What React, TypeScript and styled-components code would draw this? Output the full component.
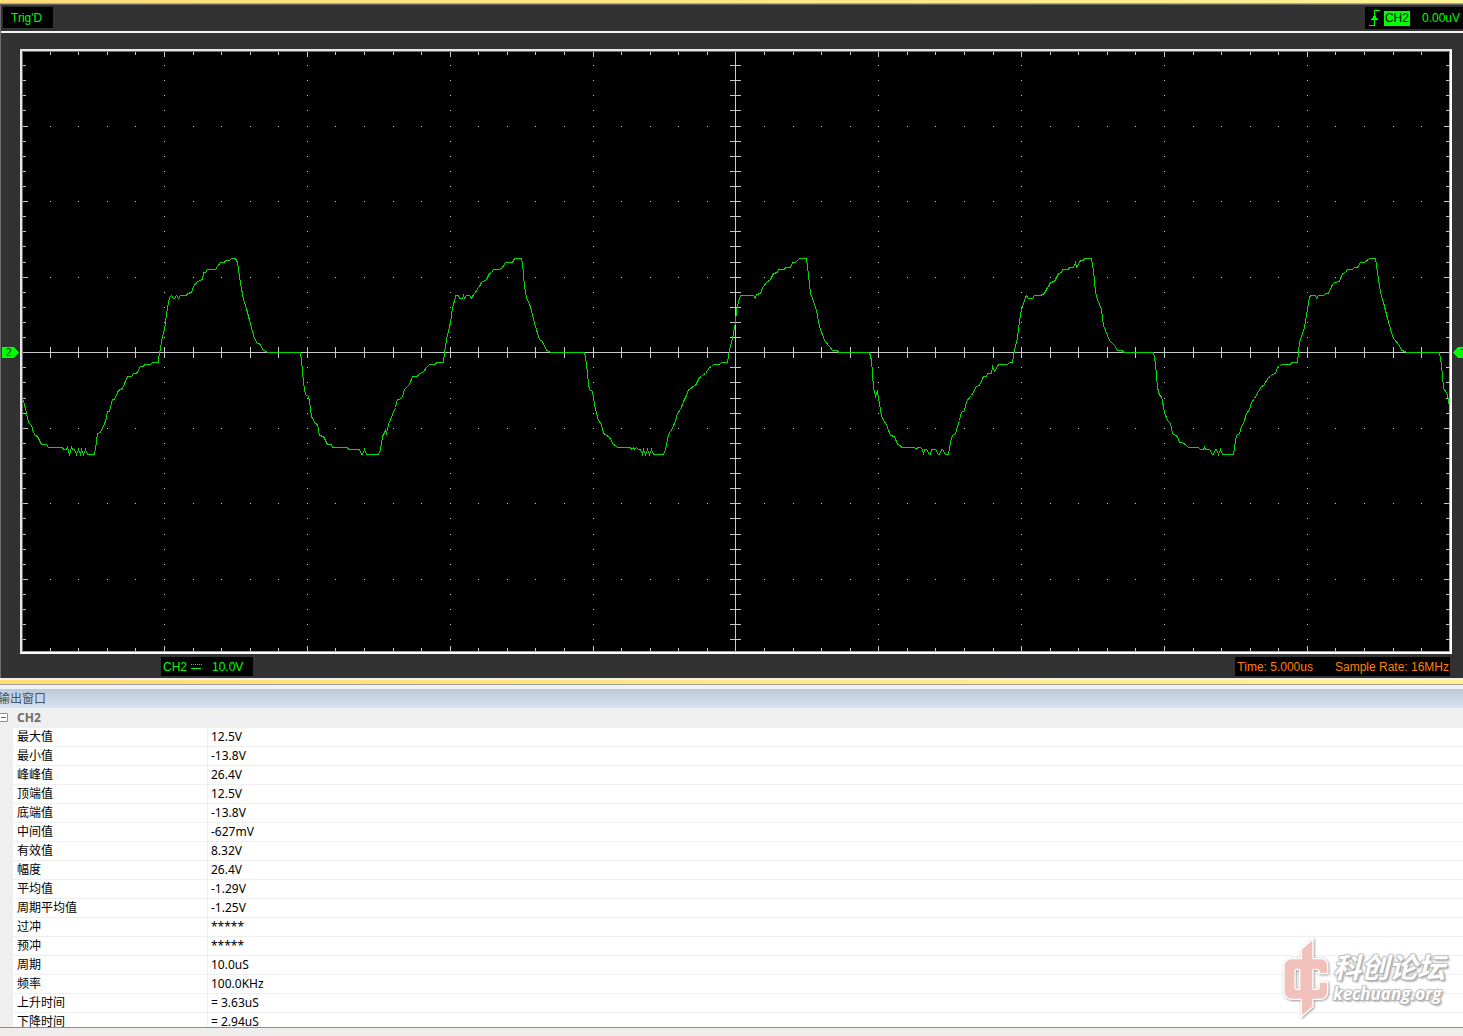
import React, { useState } from 'react';
import styled, { createGlobalStyle } from 'styled-components';

const GlobalStyle = createGlobalStyle`
  * { box-sizing: border-box; }
  html, body { margin: 0; padding: 0; background: #f0eded; }
`;

const UI_FONT = '"Noto Sans", "Noto Sans CJK SC", sans-serif';
const SCOPE_FONT = '"Liberation Sans", Arial, sans-serif';

const Page = styled.main`
  display: flex;
  flex-direction: column;
  height: 100vh;
  overflow: hidden;
  font-family: ${UI_FONT};
  font-size: 12px;
`;

const Band = styled.div<{ $size: number }>`
  flex: none;
  height: ${(p) => p.$size}px;
  background: linear-gradient(90deg, #ffdd79, #fff293);
`;

const Scope = styled.section`
  flex: none;
  background: #323232;
  border-left: 1px solid #6e6e6e;
  border-top: 1px solid #666;
  box-shadow: 0 -1px 0 #a9a494;
  margin-top: 1px;
  font-family: ${SCOPE_FONT};
  color: #00ff00;
`;

const StatusBar = styled.header`
  display: flex;
  justify-content: space-between;
  align-items: flex-start;
  height: 28px;
  padding: 2px 0 0 2px;
  border-bottom: 2px solid #f4f4f4;
`;

const Readout = styled.div<{ $height: number; $pad: string; $color?: string; $gap?: number }>`
  display: flex;
  align-items: center;
  gap: ${(p) => p.$gap ?? 0}px;
  height: ${(p) => p.$height}px;
  padding: ${(p) => p.$pad};
  background: #000;
  color: ${(p) => p.$color ?? '#00ff00'};
  line-height: 16px;
  white-space: nowrap;
`;

const Tag = styled.span`
  height: 15px;
  padding: 0 1px;
  margin: 0 8px 0 0;
  line-height: 15px;
  background: #00ff00;
  color: #000;
`;

const ScopeBody = styled.div`
  display: grid;
  grid-template-columns: 19px minmax(0, 1fr) 11px;
  align-items: center;
  padding-top: 16px;
`;

const Gutter = styled.div`
  padding: 2px 0 0 1px;
  overflow: hidden;
`;

const MarkerSvg = styled.svg`
  display: block;
`;

const Frame = styled.div`
  border: 2px solid #fff;
  border-top-color: #e6e6e6;
  border-left-color: #e6e6e6;
`;

const Bezel = styled.div`
  border: 1px solid #a8a8a8;
  border-top-color: #6a6a6a;
  border-left-color: #6a6a6a;
  background: #000;
`;

const Plot = styled.svg`
  display: block;
  width: 100%;
  height: auto;
`;

const ScopeFooter = styled.footer`
  display: flex;
  justify-content: space-between;
  padding: 3px 13px 2px 160px;
`;

const Splitter = styled.div`
  flex: none;
  border-top: 2px solid #f3f1ee;
  border-bottom: 4px solid #eef0fa;
`;

const SplitterLine = styled.div`
  border-bottom: 1px solid #a39e90;
`;

const Output = styled.section`
  display: flex;
  flex-direction: column;
  flex: 1;
  min-height: 0;
  position: relative;
`;

const OutputTitle = styled.h2`
  flex: none;
  height: 20px;
  margin: 0;
  border-bottom: 1px solid #eef1f5;
  background: linear-gradient(#bccad9, #d6e3f0);
  color: #46525f;
  font-size: 12px;
  font-weight: 400;
  line-height: 19px;
  text-indent: -2px;
`;

const TableArea = styled.div`
  flex: 1;
  min-height: 0;
  overflow: hidden;
  background: #fff;
  border-bottom: 1px solid #8c8c8c;
`;

const BottomStrip = styled.div`
  flex: none;
  height: 8px;
  background: #f0eded;
`;

const Table = styled.table`
  width: 100%;
  border-collapse: separate;
  border-spacing: 0;
  table-layout: fixed;
  color: #000;
`;

const LabelCol = styled.col`
  width: 208px;
`;

const GroupCell = styled.th`
  height: 19px;
  padding: 0;
  background: #efefef;
  text-align: left;
  vertical-align: top;
`;

const GroupLine = styled.div`
  display: flex;
  align-items: center;
  gap: 9px;
  height: 17px;
  color: #6d6d6d;
  line-height: 16px;
`;

const Toggle = styled.button`
  display: block;
  width: 9px;
  height: 9px;
  margin-left: -1px;
  padding: 0;
  border: 1px solid #919191;
  border-radius: 1px;
  background: #fff linear-gradient(#4b63a7, #4b63a7) center / 5px 1px no-repeat;
`;

const Label = styled.th`
  height: 19px;
  padding: 0 0 0 4px;
  border-left: 13px solid #efefef;
  border-right: 1px solid #efefef;
  border-bottom: 1px solid #efefef;
  font-weight: 400;
  line-height: 18px;
  text-align: left;
`;

const Value = styled.td`
  height: 19px;
  padding: 0 0 0 3px;
  border-bottom: 1px solid #efefef;
  line-height: 18px;
`;

const Watermark = styled.div`
  position: absolute;
  right: 18px;
  bottom: 16px;
  display: flex;
  align-items: center;
  color: #fff;
  font-style: italic;
  font-weight: 700;
  white-space: nowrap;
  pointer-events: none;
  text-shadow: 1px 1px 1px #aaa, -1px -1px 1px #c4c4c4, 1px -1px 1px #c4c4c4, -1px 1px 1px #b4b4b4, 2px 2px 2px #b4b4b4;
`;

const WatermarkText = styled.div`
  display: flex;
  flex-direction: column;
  padding-left: 2px;
`;

const WatermarkName = styled.span`
  font-family: "Noto Sans CJK SC", sans-serif;
  font-size: 28px;
  line-height: 32px;
`;

const WatermarkSite = styled.span`
  font-family: "Open Sans", sans-serif;
  font-size: 17px;
  line-height: 24px;
`;

/* Plot space: the screen spans x 23..1449 and y 52..651. */
const LEFT = 23;
const TOP = 52;
const RIGHT = 1449;
const BOTTOM = 651;
const CENTER_X = 735;
const CENTER_Y = 352;

const columns = Array.from({ length: 49 }, (_, i) => ({
  at: Math.floor(21.61 + 28.573 * (i + 1)),
  major: (i + 1) % 5 === 0,
}));
const rows = Array.from({ length: 39 }, (_, i) => ({
  at: Math.floor(50.5 + 15.11 * (i + 1)),
  major: (i + 1) % 5 === 0,
}));

function gridPath(): string {
  const parts: string[] = [];
  const rect = (x: number, y: number, w: number, h: number) =>
    parts.push(`M${x} ${y}h${w}v${h}h${-w}z`);
  rect(LEFT, CENTER_Y, RIGHT - LEFT, 1);
  rect(CENTER_X, TOP, 1, BOTTOM - TOP);
  columns.forEach((c) => {
    const len = c.major ? 5 : 3;
    rect(c.at, TOP, 1, len);
    rect(c.at, BOTTOM - len, 1, len);
    rect(c.at, CENTER_Y - 5, 1, 11);
  });
  rows.forEach((r) => {
    const len = r.major ? 5 : 3;
    rect(LEFT, r.at, len, 1);
    rect(RIGHT - len, r.at, len, 1);
    rect(CENTER_X - 5, r.at, 11, 1);
  });
  columns.forEach((c) =>
    rows.forEach((r) => {
      if (c.major || r.major) rect(c.at, r.at, 1, 1);
    }),
  );
  return parts.join('');
}

const TRACE = `23,400 26,413 28,422 31,425 33,432 35,435 37,436 41,444 46,444 48,447 62,447 63,449 66,449 67,447 69,454 71,447 72,449 74,449 76,454 78,449 80,454 81,449 83,454 85,449 87,454 94,454
95,448 97,433 100,432 105,421 107,411 109,411 112,399 114,399 118,390 122,388 127,376 131,376 133,373 136,373 140,366 143,366 144,364 150,364 152,362 158,362
158,358 160,348 162,336 164,329 167,307 169,297 171,295 173,298 174,298 176,295 178,298 180,295 186,295 187,293 191,292 193,286 197,281 202,279 203,272 205,272 207,269 215,269 217,266 220,262 224,262 225,260 229,260 231,258 235,258
237,262 240,283 243,299 246,308 249,320 254,338 257,343 259,343 263,350 266,351 267,352 300,352
301,360 303,382 305,394 308,396 309,400 311,416 315,423 317,424 319,435 323,436 327,444 331,444 332,447 347,447 348,449 359,449 361,454 362,454 364,449 366,454 378,454
380,449 382,436 385,430 386,433 388,424 392,414 395,407 397,399 399,399 402,396 404,389 409,384 412,376 417,376 418,374 423,371 426,367 429,364 435,364 436,362 443,362
444,352 446,339 450,322 452,307 455,297 455,295 458,295 459,298 462,298 463,295 464,298 466,295 469,295 471,298 473,294 475,292 478,287 479,286 481,282 486,279 489,273 491,272 493,269 499,269 502,267 505,262 512,262 514,258 521,258
522,263 524,286 526,297 530,306 534,323 539,339 542,341 546,350 549,351 550,352 584,352
586,363 588,383 589,389 592,391 595,409 598,420 601,424 603,433 605,434 609,437 613,444 615,445 617,447 630,447 631,449 633,447 634,449 636,447 638,449 640,449 642,454 643,449 645,454 647,449 649,454 651,449 653,454 663,454
665,449 668,434 672,428 675,420 677,413 680,409 683,401 686,395 688,389 691,388 692,386 695,385 699,377 701,376 703,374 705,373 709,367 711,366 713,364 719,364 721,362 727,362
729,349 732,338 735,322 736,310 738,301 740,295 753,295 755,298 756,294 760,293 762,287 763,286 766,282 770,279 773,273 777,272 778,269 784,269 785,267 790,267 792,262 795,262 799,258 806,258
808,275 810,293 812,298 816,310 819,326 824,340 829,346 832,350 837,350 838,352 869,352
871,360 873,387 875,396 877,390 878,398 881,415 883,420 886,424 890,435 894,436 897,444 900,445 901,447 914,447 916,449 917,447 920,447 922,449 923,454 924,449 926,449 929,454 930,454 931,449 935,449 938,454 939,454 941,449 942,449 945,454 948,454
950,441 952,435 955,433 957,426 959,420 961,412 964,410 966,401 971,395 976,386 979,385 983,376 986,376 987,373 991,373 992,366 994,371 997,366 998,364 1007,364 1009,362 1012,362
1014,350 1017,337 1019,320 1021,309 1025,297 1026,295 1028,298 1032,298 1034,295 1040,295 1044,293 1047,287 1048,286 1050,282 1054,281 1058,273 1061,272 1062,269 1068,269 1069,267 1073,267 1075,262 1076,267 1079,262 1080,260 1083,260 1084,258 1091,258
1093,270 1095,292 1097,299 1101,309 1103,325 1109,340 1114,345 1117,350 1122,350 1123,352 1153,352
1155,363 1157,387 1159,395 1161,396 1164,412 1167,420 1170,423 1172,433 1175,435 1177,436 1179,442 1182,442 1186,445 1188,447 1198,447 1200,449 1203,449 1204,447 1205,449 1209,449 1212,454 1213,454 1215,449 1216,449 1218,454 1220,449 1222,454 1233,454
1234,447 1236,435 1239,433 1241,426 1243,423 1246,413 1249,409 1251,402 1254,398 1258,391 1261,386 1263,385 1268,377 1270,376 1272,374 1275,373 1277,367 1279,366 1281,364 1290,364 1291,362 1297,362
1299,342 1302,333 1304,327 1307,308 1309,297 1310,295 1315,295 1316,298 1318,295 1323,295 1325,293 1328,293 1332,284 1334,282 1339,281 1342,273 1345,272 1347,269 1352,269 1354,267 1357,267 1360,262 1364,262 1369,258 1375,258
1377,272 1380,292 1383,302 1387,318 1391,332 1393,338 1399,345 1401,350 1405,351 1406,352 1439,352
1441,365 1443,387 1444,390 1445,390 1447,395 1449,406`;

const MEASUREMENTS: [string, string][] = [
  ['最大值', '12.5V'],
  ['最小值', '-13.8V'],
  ['峰峰值', '26.4V'],
  ['顶端值', '12.5V'],
  ['底端值', '-13.8V'],
  ['中间值', '-627mV'],
  ['有效值', '8.32V'],
  ['幅度', '26.4V'],
  ['平均值', '-1.29V'],
  ['周期平均值', '-1.25V'],
  ['过冲', '*****'],
  ['预冲', '*****'],
  ['周期', '10.0uS'],
  ['频率', '100.0KHz'],
  ['上升时间', '= 3.63uS'],
  ['下降时间', '= 2.94uS'],
];

function ChannelMarker() {
  return (
    <MarkerSvg width="17" height="11" viewBox="0 0 17 11" aria-hidden="true">
      <path d="M0 0H12L17 5.5L12 11H0Z" fill="#00ff00" />
      <text x="4" y="9" fontFamily="Liberation Sans, sans-serif" fontSize="10" fill="#003c00">2</text>
    </MarkerSvg>
  );
}

function TriggerMarker() {
  return (
    <MarkerSvg width="17" height="11" viewBox="0 0 17 11" aria-hidden="true">
      <path d="M17 0H5L0 5.5L5 11H17Z" fill="#00ff00" />
      <path d="M8 2.5h6" stroke="#000" fill="none" />
    </MarkerSvg>
  );
}

function RisingEdgeIcon() {
  return (
    <svg width="11" height="18" viewBox="0 0 11 18" fill="none" stroke="#00ff00" shapeRendering="crispEdges" aria-hidden="true">
      <path d="M0 16.5H5.5V1.5H11" />
      <path d="M5.5 6L2 11H9Z" fill="#00ff00" stroke="none" />
    </svg>
  );
}

function CouplingIcon() {
  return (
    <svg width="11" height="5" viewBox="0 0 11 5" fill="none" stroke="#00ff00" shapeRendering="crispEdges" aria-hidden="true">
      <path d="M0 .5H11" strokeDasharray="1 1" />
      <path d="M0 4.5H10" />
    </svg>
  );
}

function WatermarkLogo() {
  return (
    <svg width="50" height="84" viewBox="57 50 150 252" aria-hidden="true">
      <defs>
        <filter id="logo-shadow" x="-20%" y="-20%" width="140%" height="140%">
          <feDropShadow dx="2" dy="2" stdDeviation="3" floodColor="#777" floodOpacity="0.9" />
        </filter>
      </defs>
      <path
        filter="url(#logo-shadow)"
        fill="#f1c0bb"
        stroke="#fff"
        strokeWidth="4"
        fillRule="evenodd"
        d="M118 118V90L153 58V118H176Q197 119 197 140V163H172V158Q172 150 164 150H153V210H164Q172 210 172 202V188H197V218Q197 238 176 240H153V262L118 293V240H88Q66 238 66 216V142Q66 120 88 118ZM113 150H107Q99 150 99 158V202Q99 210 107 210H113Z"
      />
    </svg>
  );
}

export default function App() {
  const [open, setOpen] = useState(true);
  return (
    <>
      <GlobalStyle />
      <Page>
        <Band $size={3} />
        <Scope>
          <StatusBar>
            <Readout $height={21} $pad="0 11px 0 8px">Trig'D</Readout>
            <Readout $height={22} $pad="0 3px 0 4px" $gap={4}>
              <RisingEdgeIcon />
              <Tag>CH2</Tag>
              <span>0.00uV</span>
            </Readout>
          </StatusBar>
          <ScopeBody>
            <Gutter>
              <ChannelMarker />
            </Gutter>
            <Frame>
              <Bezel>
                <Plot viewBox={`${LEFT} ${TOP} ${RIGHT - LEFT} ${BOTTOM - TOP}`} shapeRendering="crispEdges" role="img" aria-label="CH2">
                  <path d={gridPath()} fill="#c8c8c8" />
                  <polyline points={TRACE} transform="translate(0.5 0.5)" fill="none" stroke="#00dc00" />
                </Plot>
              </Bezel>
            </Frame>
            <Gutter>
              <TriggerMarker />
            </Gutter>
          </ScopeBody>
          <ScopeFooter>
            <Readout $height={19} $pad="0 10px 0 2px" $gap={10}>
              <Readout as="span" $height={19} $pad="0" $gap={4}>
                CH2
                <CouplingIcon />
              </Readout>
              <span>10.0V</span>
            </Readout>
            <Readout $height={19} $pad="0 1px 0 2px" $color="#ff8000" $gap={22}>
              <span>Time: 5.000us</span>
              <span>Sample Rate: 16MHz</span>
            </Readout>
          </ScopeFooter>
        </Scope>
        <Splitter>
          <SplitterLine>
            <Band $size={4} />
          </SplitterLine>
        </Splitter>
        <Output>
          <OutputTitle>输出窗口</OutputTitle>
          <TableArea>
            <Table>
              <colgroup>
                <LabelCol />
                <col />
              </colgroup>
              <thead>
                <tr>
                  <GroupCell colSpan={2}>
                    <GroupLine>
                      <Toggle type="button" aria-label="CH2" aria-expanded={open} onClick={() => setOpen(!open)} />
                      CH2
                    </GroupLine>
                  </GroupCell>
                </tr>
              </thead>
              {open && (
                <tbody>
                  {MEASUREMENTS.map(([name, value]) => (
                    <tr key={name}>
                      <Label scope="row">{name}</Label>
                      <Value>{value}</Value>
                    </tr>
                  ))}
                </tbody>
              )}
            </Table>
          </TableArea>
          <BottomStrip />
          <Watermark>
            <WatermarkLogo />
            <WatermarkText>
              <WatermarkName>科创论坛</WatermarkName>
              <WatermarkSite>kechuang.org</WatermarkSite>
            </WatermarkText>
          </Watermark>
        </Output>
      </Page>
    </>
  );
}
